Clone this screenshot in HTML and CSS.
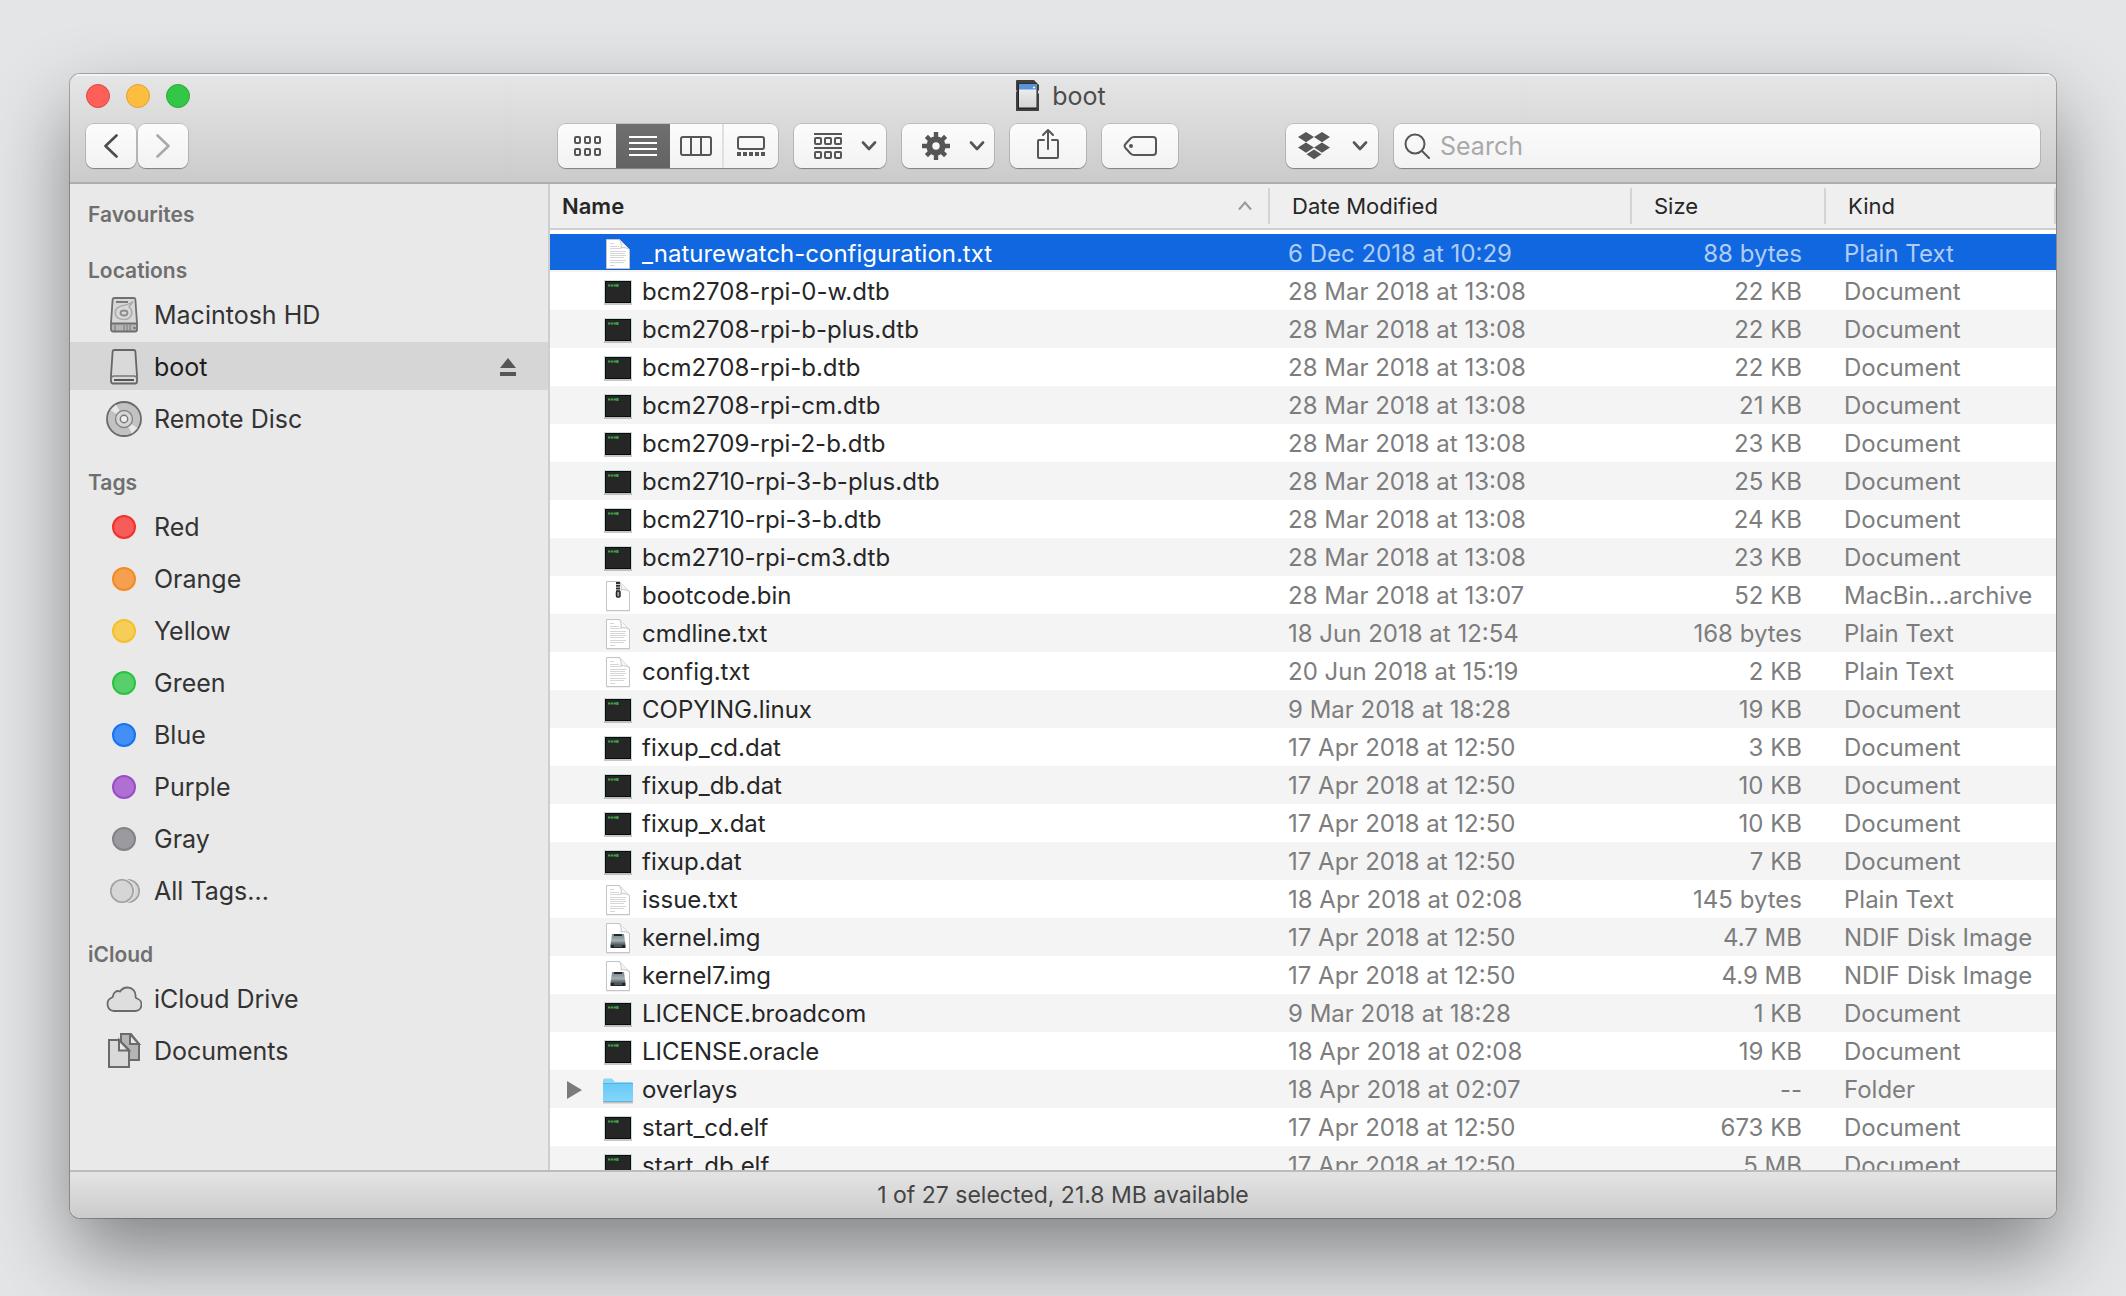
FILE: index.html
```
<!DOCTYPE html>
<html lang="en">
<head>
<meta charset="utf-8">
<title>boot</title>
<link rel="stylesheet" href="styles.css">
</head>
<body>
<svg class="sprite" aria-hidden="true">
  <defs>
    <linearGradient id="folder-fill" x1="0" y1="0" x2="0" y2="1"><stop offset="0" stop-color="#69cbf7"/><stop offset="1" stop-color="#85d5f9"/></linearGradient>
    <linearGradient id="card-fill" x1="0" y1="0" x2="0" y2="1"><stop offset="0" stop-color="#f4f4f4"/><stop offset="1" stop-color="#d4d4d4"/></linearGradient>
    <linearGradient id="drive-fill" x1="0" y1="0" x2="0" y2="1"><stop offset="0" stop-color="#75828a"/><stop offset=".6" stop-color="#a4b0b5"/><stop offset="1" stop-color="#4b5458"/></linearGradient>
  </defs>
  <symbol id="exec" viewBox="0 0 32 32">
    <rect x="2" y="5" width="28" height="24" fill="#000" opacity=".22"/>
    <rect x="2" y="4" width="28" height="23" fill="#c5dde0"/>
    <rect x="3" y="5" width="26" height="22" fill="#0c0c0c"/>
    <rect x="4" y="6" width="24" height="20" fill="#262626"/>
    <path d="M6 9.500h2.500M9 9.500h2.500M12 9.500h2.500M15.500 8v3" stroke="#3f9d4b" stroke-width="2" fill="none"/>
  </symbol>
  <symbol id="page" viewBox="0 0 32 32">
    <path d="M4 2.500h14l10 10v19H4z" fill="#000" opacity=".12"/>
    <path d="M4.500 1.500h13l10 10v19h-23z" fill="#fff" stroke="#c4c4c4"/>
    <path d="M17.500 1.500c1.500 3 2 5 1.500 8.500 3-1 6 0 8.500 1.500" fill="#f6f6f6" stroke="#c4c4c4"/>
  </symbol>
  <symbol id="text" viewBox="0 0 32 32">
    <use href="#page"/>
    <path d="M8 5.500h4M8 8.500h9M8 10.500h11M8 13.500h16M8 15.500h15M8 17.500h16M8 19.500h14M8 22.500h16M8 24.500h14M8 27.500h5" stroke="#d6d6d6" fill="none"/>
  </symbol>
  <symbol id="archive" viewBox="0 0 32 32">
    <use href="#page"/>
    <path d="M16 2v12" stroke="#2b3236" stroke-width="4" stroke-dasharray="2 .8" fill="none"/>
    <rect x="14.500" y="11" width="3.500" height="6" rx="1" fill="#9aa3a8" stroke="#22282b" stroke-width="1.500"/>
  </symbol>
  <symbol id="image" viewBox="0 0 32 32">
    <use href="#page"/>
    <path d="M10 12h12l1.500 11H8.500z" fill="url(#drive-fill)"/>
    <path d="M12 13h8" stroke="#20272a" stroke-width="2"/>
    <path d="M8.500 23h15v3h-15z" fill="#20272a"/>
    <path d="M12 24h8" stroke="#77848a"/>
  </symbol>
  <symbol id="folder" viewBox="0 0 32 32">
    <path d="M1 28.500h30" stroke="#000" opacity=".2" stroke-width="2"/>
    <path d="M1 6a1.500 1.500 0 0 1 1.500-1.500H10L13 8h16.500A1.500 1.500 0 0 1 31 9.500V26H1z" fill="#8fd6f7"/>
    <path d="M1 10h30v16.500a1 1 0 0 1-1 1H2a1 1 0 0 1-1-1z" fill="url(#folder-fill)"/>
    <path d="M1 9.500h30M1.500 27.500h29" stroke="#58b4df"/>
  </symbol>
  <symbol id="chevron" viewBox="0 0 16 10"><path d="M2 1.500l6 6.500 6-6.500" fill="none" stroke="#565656" stroke-width="2.600" stroke-linecap="round" stroke-linejoin="round"/></symbol>
</svg>

<main class="window">
  <header class="toolbar">
    <div class="titlebar">
      <div class="lights">
        <button class="light close" aria-label="Close"></button>
        <button class="light minimise" aria-label="Minimise"></button>
        <button class="light zoom" aria-label="Zoom"></button>
      </div>
      <h1 class="title">
        <svg width="24" height="32" viewBox="0 0 24 32"><path d="M0 1a1 1 0 0 1 1-1h17l5 5v5l-1 1v2l1 1v17H0V12l1-1-1-1z" fill="#3f3f3f"/><path d="M2 3.500h19V29H2z" fill="#242424"/><path d="M3 4h17.500v23.500H3z" fill="url(#card-fill)"/><path d="M3 4h17.500v5.500H3z" fill="#5b92da"/><path d="M17 7.500h2" stroke="#fff" stroke-width="1.500"/></svg>
        boot
      </h1>
    </div>
    <div class="controls">
      <div class="nav">
        <button class="btn arrow" aria-label="Back"><svg width="14" height="24" viewBox="0 0 14 24" fill="none" stroke="#4c4c4c" stroke-width="2.600" stroke-linecap="round" stroke-linejoin="round"><path d="M12.500 1.500L1.500 12l11 10.500"/></svg></button>
        <button class="btn arrow" aria-label="Forward"><svg width="14" height="24" viewBox="0 0 14 24" fill="none" stroke="#a9a9a9" stroke-width="2.600" stroke-linecap="round" stroke-linejoin="round"><path d="M1.500 1.500l11 10.500-11 10.500"/></svg></button>
      </div>
      <span class="gap-left"></span>
      <div class="tools">
        <div class="segments">
          <button class="segment first" aria-label="Icon view"><svg width="30" height="22" viewBox="0 0 30 22" fill="none" stroke="#565656" stroke-width="2"><rect x="2" y="2" width="5" height="6" rx="1"/><rect x="12" y="2" width="5" height="6" rx="1"/><rect x="22" y="2" width="5" height="6" rx="1"/><rect x="2" y="14" width="5" height="6" rx="1"/><rect x="12" y="14" width="5" height="6" rx="1"/><rect x="22" y="14" width="5" height="6" rx="1"/></svg></button>
          <button class="segment active" aria-label="List view" aria-pressed="true"><svg width="28" height="20" viewBox="0 0 28 20" stroke="#fff" stroke-width="2"><path d="M0 1h28M0 7h28M0 13h28M0 19h28"/></svg></button>
          <button class="segment columns" aria-label="Column view"><svg width="32" height="20" viewBox="0 0 32 20" fill="none" stroke="#565656" stroke-width="2"><rect x="1" y="1" width="30" height="18" rx="2"/><path d="M11 1v18M21 1v18"/></svg></button>
          <button class="segment last" aria-label="Gallery view"><svg width="28" height="20" viewBox="0 0 28 20" fill="none" stroke="#565656" stroke-width="2"><rect x="1" y="1" width="26" height="12" rx="2"/><path d="M0 18h28" stroke-width="4" stroke-dasharray="4 2"/></svg></button>
        </div>
        <button class="btn menu" aria-label="Group">
          <svg width="28" height="26" viewBox="0 0 28 26" fill="none" stroke="#565656" stroke-width="2"><path d="M0 1h28M0 15h28"/><rect x="1" y="5" width="6" height="6" rx="1"/><rect x="11" y="5" width="6" height="6" rx="1"/><rect x="21" y="5" width="6" height="6" rx="1"/><rect x="1" y="19" width="6" height="6" rx="1"/><rect x="11" y="19" width="6" height="6" rx="1"/><rect x="21" y="19" width="6" height="6" rx="1"/></svg>
          <svg width="16" height="10"><use href="#chevron"/></svg>
        </button>
        <button class="btn menu" aria-label="Action">
          <svg width="28" height="28" viewBox="0 0 28 28"><g stroke="#565656" stroke-width="4.400" fill="none"><path d="M14 0v7M14 21v7M0 14h7M21 14h7M4.400 4.400l5 5M18.600 18.600l5 5M23.600 4.400l-5 5M9.400 18.600l-5 5"/><circle cx="14" cy="14" r="6.700" stroke-width="6"/></g></svg>
          <svg width="16" height="10"><use href="#chevron"/></svg>
        </button>
        <button class="btn single" aria-label="Share"><svg class="raised" width="24" height="32" viewBox="0 0 24 32" fill="none" stroke="#565656" stroke-width="2" stroke-linejoin="round" stroke-linecap="round"><path d="M8 12H3a1 1 0 0 0-1 1v16a1 1 0 0 0 1 1h18a1 1 0 0 0 1-1V13a1 1 0 0 0-1-1h-5M12 21V2M7 7l5-5 5 5"/></svg></button>
        <button class="btn single" aria-label="Edit tags"><svg width="34" height="22" viewBox="0 0 34 22"><path d="M11 2h19a3 3 0 0 1 3 3v12a3 3 0 0 1-3 3H11c-1.500 0-2.500-.5-3.500-1.500l-5-5.500a3 3 0 0 1 0-4l5-5.500C8.500 2.500 9.500 2 11 2z" fill="none" stroke="#565656" stroke-width="2"/><circle cx="8" cy="11" r="2" fill="#565656"/></svg></button>
      </div>
      <span class="gap-right"></span>
      <div class="tools search-tools">
        <button class="btn menu" aria-label="Dropbox">
          <svg width="32" height="28" viewBox="0 0 32 28" fill="#565656"><path d="M8 0l8 5-8 5.200L0 5zM24 0l8 5-8 5.200L16 5zM8 10.400l8 5.100-8 5.200-8-5.200zM24 10.400l8 5.100-8 5.200-8-5.200zM16 17.500l7.500 4.800L16 27.200l-7.500-4.900z"/></svg>
          <svg width="16" height="10"><use href="#chevron"/></svg>
        </button>
        <label class="btn search">
          <svg width="26" height="26" viewBox="0 0 26 26" fill="none" stroke="#565656" stroke-width="2" stroke-linecap="round"><circle cx="11" cy="11" r="9.500"/><path d="M18 18l7 7"/></svg>
          <input type="search" placeholder="Search" aria-label="Search">
        </label>
      </div>
    </div>
  </header>

  <div class="content">
    <nav class="sidebar">
      <h2 class="group top">Favourites</h2>
      <h2 class="group">Locations</h2>
      <a class="place" href="#"><svg width="36" height="36" viewBox="0 0 36 36"><path d="M8.500 1h19q1.700 0 1.900 1.700L31 26.500H5L6.600 2.700Q6.800 1 8.500 1z" fill="#d8d8d8"/><path d="M5 26.500h26v6a2 2 0 0 1-2 2H7a2 2 0 0 1-2-2z" fill="#b4b4b4"/><path d="M8.500 1h19q1.700 0 1.900 1.700L31 26v6.500a2 2 0 0 1-2 2H7a2 2 0 0 1-2-2V26L6.600 2.700Q6.800 1 8.500 1zM5 26.500h26" fill="none" stroke="#6f6f6f" stroke-width="1.800"/><path d="M10 5h12" stroke="#6f6f6f" stroke-width="1.800"/><path d="M27 4.500l-4 5.500c5 4 3 12.500-5 12.500-10 0-12-10.500-3-13.500 5-1 8-1 12-4.500z" fill="none" stroke="#ababab" stroke-width="1.600"/><ellipse cx="18" cy="16" rx="3.500" ry="2.500" fill="none" stroke="#8d8d8d" stroke-width="1.800"/><path d="M9 28v6M18 28v6M21 28v6M24 28v6" stroke="#777"/><circle cx="28.500" cy="31" r="1" fill="#555"/></svg>Macintosh HD</a>
      <a class="place current" href="#"><svg width="36" height="36" viewBox="0 0 36 36"><path d="M8.500 1h19q1.700 0 1.900 1.700L31 27v5.500a2 2 0 0 1-2 2H7a2 2 0 0 1-2-2V27L6.600 2.700Q6.800 1 8.500 1z" fill="#d9d9d9" stroke="#666" stroke-width="1.800"/><path d="M6 28.500q0-1.500 2-1.500h20q2 0 2 1.500" fill="none" stroke="#777" stroke-width="1.500"/><path d="M8 31h20" stroke="#555" stroke-width="2"/></svg>boot
        <svg class="eject" width="16" height="18" viewBox="0 0 16 18" fill="#565656"><path d="M8 0l8 10H0zM0 14h16v4H0z"/></svg></a>
      <a class="place" href="#"><svg width="36" height="36" viewBox="0 0 36 36"><circle cx="18" cy="18" r="17" fill="#c2c2c2" stroke="#6a6a6a" stroke-width="1.800"/><path d="M18 18L4.500 9l5.500-5.500zM18 18l13.500 9-5.500 5.500z" fill="#e8e8e8"/><circle cx="18" cy="18" r="8.500" fill="#d6d6d6" stroke="#858585" stroke-width="1.400"/><circle cx="18" cy="18" r="3.700" fill="#efefef" stroke="#777" stroke-width="1.400"/></svg>Remote Disc</a>
      <h2 class="group">Tags</h2>
      <a class="place" href="#"><i class="dot red"></i>Red</a>
      <a class="place" href="#"><i class="dot orange"></i>Orange</a>
      <a class="place" href="#"><i class="dot yellow"></i>Yellow</a>
      <a class="place" href="#"><i class="dot green"></i>Green</a>
      <a class="place" href="#"><i class="dot blue"></i>Blue</a>
      <a class="place" href="#"><i class="dot purple"></i>Purple</a>
      <a class="place" href="#"><i class="dot gray"></i>Gray</a>
      <a class="place" href="#"><svg width="36" height="36" viewBox="0 0 36 36" fill="#d6d6d6" stroke="#a0a0a0" stroke-width="1.600"><circle cx="22" cy="18" r="11.200"/><circle cx="16" cy="18" r="13" fill="#e9e9e9" stroke="none"/><circle cx="16" cy="18" r="11.200"/></svg>All Tags...</a>
      <h2 class="group">iCloud</h2>
      <a class="place" href="#"><svg width="36" height="36" viewBox="0 0 36 36"><path d="M8 30a7 7 0 0 1-2-13.500q.8-.5 1-1.500c.5-4 4-6 7-4.500C16 7.500 18.500 6.500 21.500 6.500c5 0 8.500 4 8 9-.1 1 .5 1.500 1.500 2A6.400 6.400 0 0 1 29 30z" fill="#dedede" stroke="#6a6a6a" stroke-width="1.800"/></svg>iCloud Drive</a>
      <a class="place" href="#"><svg width="36" height="36" viewBox="0 0 36 36" stroke="#6a6a6a" stroke-width="2"><path d="M15 1h10l8 10v16H15z" fill="#b4b4b4"/><path d="M24 1v10h9z" fill="#e8e8e8"/><path d="M3 7h10l10 10v17H3z" fill="#d9d9d9"/><path d="M13 7v10.500h10z" fill="#e8e8e8"/></svg>Documents</a>
    </nav>

    <section class="files">
      <table>
        <colgroup><col><col class="col-date"><col class="col-size"><col class="col-kind"></colgroup>
        <thead>
          <tr>
            <th class="name" aria-sort="ascending"><span>Name <svg width="14" height="10" viewBox="0 0 14 10"><path d="M1 8.500L7 1.500l6 7" fill="none" stroke="#999" stroke-width="2"/></svg></span></th>
            <th><span>Date Modified</span></th><th><span>Size</span></th><th class="kind"><span>Kind</span></th>
          </tr>
        </thead>
        <tbody>
          <tr class="selected"><td><svg><use href="#text"/></svg>_naturewatch-configuration.txt</td><td>6 Dec 2018 at 10:29</td><td>88 bytes</td><td>Plain Text</td></tr>
          <tr><td><svg><use href="#exec"/></svg>bcm2708-rpi-0-w.dtb</td><td>28 Mar 2018 at 13:08</td><td>22 KB</td><td>Document</td></tr>
          <tr><td><svg><use href="#exec"/></svg>bcm2708-rpi-b-plus.dtb</td><td>28 Mar 2018 at 13:08</td><td>22 KB</td><td>Document</td></tr>
          <tr><td><svg><use href="#exec"/></svg>bcm2708-rpi-b.dtb</td><td>28 Mar 2018 at 13:08</td><td>22 KB</td><td>Document</td></tr>
          <tr><td><svg><use href="#exec"/></svg>bcm2708-rpi-cm.dtb</td><td>28 Mar 2018 at 13:08</td><td>21 KB</td><td>Document</td></tr>
          <tr><td><svg><use href="#exec"/></svg>bcm2709-rpi-2-b.dtb</td><td>28 Mar 2018 at 13:08</td><td>23 KB</td><td>Document</td></tr>
          <tr><td><svg><use href="#exec"/></svg>bcm2710-rpi-3-b-plus.dtb</td><td>28 Mar 2018 at 13:08</td><td>25 KB</td><td>Document</td></tr>
          <tr><td><svg><use href="#exec"/></svg>bcm2710-rpi-3-b.dtb</td><td>28 Mar 2018 at 13:08</td><td>24 KB</td><td>Document</td></tr>
          <tr><td><svg><use href="#exec"/></svg>bcm2710-rpi-cm3.dtb</td><td>28 Mar 2018 at 13:08</td><td>23 KB</td><td>Document</td></tr>
          <tr><td><svg><use href="#archive"/></svg>bootcode.bin</td><td>28 Mar 2018 at 13:07</td><td>52 KB</td><td>MacBin...archive</td></tr>
          <tr><td><svg><use href="#text"/></svg>cmdline.txt</td><td>18 Jun 2018 at 12:54</td><td>168 bytes</td><td>Plain Text</td></tr>
          <tr><td><svg><use href="#text"/></svg>config.txt</td><td>20 Jun 2018 at 15:19</td><td>2 KB</td><td>Plain Text</td></tr>
          <tr><td><svg><use href="#exec"/></svg>COPYING.linux</td><td>9 Mar 2018 at 18:28</td><td>19 KB</td><td>Document</td></tr>
          <tr><td><svg><use href="#exec"/></svg>fixup_cd.dat</td><td>17 Apr 2018 at 12:50</td><td>3 KB</td><td>Document</td></tr>
          <tr><td><svg><use href="#exec"/></svg>fixup_db.dat</td><td>17 Apr 2018 at 12:50</td><td>10 KB</td><td>Document</td></tr>
          <tr><td><svg><use href="#exec"/></svg>fixup_x.dat</td><td>17 Apr 2018 at 12:50</td><td>10 KB</td><td>Document</td></tr>
          <tr><td><svg><use href="#exec"/></svg>fixup.dat</td><td>17 Apr 2018 at 12:50</td><td>7 KB</td><td>Document</td></tr>
          <tr><td><svg><use href="#text"/></svg>issue.txt</td><td>18 Apr 2018 at 02:08</td><td>145 bytes</td><td>Plain Text</td></tr>
          <tr><td><svg><use href="#image"/></svg>kernel.img</td><td>17 Apr 2018 at 12:50</td><td>4.7 MB</td><td>NDIF Disk Image</td></tr>
          <tr><td><svg><use href="#image"/></svg>kernel7.img</td><td>17 Apr 2018 at 12:50</td><td>4.9 MB</td><td>NDIF Disk Image</td></tr>
          <tr><td><svg><use href="#exec"/></svg>LICENCE.broadcom</td><td>9 Mar 2018 at 18:28</td><td>1 KB</td><td>Document</td></tr>
          <tr><td><svg><use href="#exec"/></svg>LICENSE.oracle</td><td>18 Apr 2018 at 02:08</td><td>19 KB</td><td>Document</td></tr>
          <tr class="folder"><td><button class="disclose" aria-label="Expand overlays"></button><svg><use href="#folder"/></svg>overlays</td><td>18 Apr 2018 at 02:07</td><td>--</td><td>Folder</td></tr>
          <tr><td><svg><use href="#exec"/></svg>start_cd.elf</td><td>17 Apr 2018 at 12:50</td><td>673 KB</td><td>Document</td></tr>
          <tr><td><svg><use href="#exec"/></svg>start_db.elf</td><td>17 Apr 2018 at 12:50</td><td>5 MB</td><td>Document</td></tr>
        </tbody>
      </table>
    </section>
  </div>

  <footer class="status">1 of 27 selected, 21.8 MB available</footer>
</main>
</body>
</html>
```
FILE: styles.css
```
* { box-sizing: border-box; }

body {
  margin: 0;
  height: 100vh;
  padding: 74px 70px 78px;
  overflow: hidden;
  background: #e4e5e7;
  color: #262626;
  font-family: Inter, "Liberation Sans", sans-serif;
  font-size: 24px;
}

button, input { font: inherit; color: inherit; }
button { padding: 0; border: 0; }
svg { flex: none; }
.sprite { position: absolute; width: 0; height: 0; }

.window {
  display: flex;
  flex-direction: column;
  height: 100%;
  overflow: hidden;
  border-radius: 10px;
  background: #fff;
  box-shadow: 0 0 0 1px rgba(0, 0, 0, .25), 0 36px 80px rgba(0, 0, 0, .43);
}

/* Toolbar */
.toolbar {
  display: flex;
  flex-direction: column;
  flex: none;
  gap: 6px;
  height: 110px;
  padding: 0 16px;
  border-bottom: 2px solid #adadad;
  background: linear-gradient(#e6e6e6, #cbcbcb);
  box-shadow: inset 0 2px #f4f4f4;
}

.titlebar {
  display: grid;
  grid-template-columns: 1fr auto 1fr;
  align-items: center;
  height: 44px;
}

.lights { display: flex; gap: 16px; }

.light {
  width: 24px;
  height: 24px;
  border: 1px solid;
  border-radius: 50%;
}
.close { background: #fe5f58; border-color: #e2443f; }
.minimise { background: #febd3f; border-color: #dfa033; }
.zoom { background: #33c748; border-color: #27aa35; }

.title {
  display: flex;
  align-items: center;
  gap: 12px;
  margin: 0;
  padding-right: 4px;
  color: #4c4c4c;
  font-size: 25px;
  font-weight: 400;
}

.controls, .nav, .tools { display: flex; }
.nav { gap: 2px; }
.tools { gap: 16px; }
.gap-left { flex: 370 0 0; }
.gap-right { flex: 108 0 0; }
.search-tools { flex: 754 0 0; }

.btn, .segments {
  height: 44px;
  border-radius: 8px;
  background: linear-gradient(#fcfcfc, #f2f2f2);
  box-shadow: 0 0 0 1px rgba(0, 0, 0, .12), 0 1px 1px rgba(0, 0, 0, .3);
}

.btn {
  display: flex;
  align-items: center;
  justify-content: center;
}

.arrow { width: 50px; }
.single { width: 76px; }
.menu { flex: none; width: 92px; gap: 19px; padding-left: 11px; }
.search-tools .menu { gap: 22px; padding-left: 2px; }
.raised { margin-bottom: 4px; }

.segments { display: flex; overflow: hidden; }
.segment {
  display: flex;
  align-items: center;
  justify-content: center;
  width: 54px;
  background: transparent;
}
.segment.first { width: 58px; padding-left: 2px; }
.segment.active { background: linear-gradient(#6f6f6f, #636363); }
.segment.columns { width: 52px; }
.segment.last { width: 56px; border-left: 2px solid #e0e0e0; }

.search {
  flex: 1;
  justify-content: flex-start;
  gap: 10px;
  padding: 0 10px;
}
.search input {
  flex: 1;
  min-width: 0;
  padding: 0;
  border: 0;
  outline: 0;
  background: transparent;
  font-size: 25px;
}
.search input::placeholder { color: #a9a9a9; opacity: 1; }

/* Sidebar */
.content { display: flex; flex: 1; min-height: 0; }

.sidebar {
  flex: none;
  width: 480px;
  overflow: hidden;
  border-right: 2px solid #cecece;
  background: #e9e9e9;
}

.group {
  height: 56px;
  margin: 0;
  padding: 18px 0 0 18px;
  color: #6f6f6f;
  font-size: 21px;
  font-weight: 600;
  line-height: 40px;
}
.group.top { height: 49px; padding-top: 11px; }

.place {
  display: flex;
  align-items: center;
  gap: 12px;
  height: 52px;
  padding: 2px 32px 0 36px;
  border: solid #e9e9e9;
  border-width: 1px 0 3px;
  color: #333;
  font-size: 25px;
  text-decoration: none;
}
.place.current { background: #d6d6d7; color: #1c1c1c; }
.eject { margin-left: auto; }

.dot {
  width: 24px;
  height: 24px;
  margin: 0 6px;
  border: 2px solid;
  border-radius: 50%;
}
.red { background: #f65c5a; border-color: #f4302f; }
.orange { background: #f5a04f; border-color: #f38a25; }
.yellow { background: #f6cd56; border-color: #f4c12d; }
.green { background: #58cf69; border-color: #2ac340; }
.blue { background: #438ff6; border-color: #1673f4; }
.purple { background: #b070d3; border-color: #9c4cc8; }
.gray { background: #9b9b9f; border-color: #828287; }

/* File list */
.files { flex: 1; min-width: 0; overflow: hidden; }

table { width: 100%; border-spacing: 0; table-layout: fixed; }
.col-date { width: 362px; }
.col-size { width: 194px; }
.col-kind { width: 232px; }

th {
  height: 46px;
  padding: 0;
  border-bottom: 2px solid #d0d0d0;
  background: #efefef;
  font-size: 22px;
  font-weight: 400;
  text-align: left;
}
th span {
  display: flex;
  align-items: center;
  justify-content: space-between;
  height: 36px;
  padding: 0 16px 0 22px;
  border-left: 2px solid #d4d4d4;
}
th.name { font-weight: 600; }
th.name span { padding-left: 12px; border-left: 0; }
th.kind span { border-right: 2px solid #d4d4d4; }

tbody::before { content: ""; display: block; height: 4px; }

td {
  height: 38px;
  padding: 2px 0 0 20px;
  color: #7d7d7d;
  line-height: 36px;
  white-space: nowrap;
}
tbody tr:nth-child(odd) td { background: #f4f4f5; }
td:first-child {
  display: flex;
  align-items: center;
  gap: 8px;
  padding-left: 52px;
  color: #262626;
}
td:first-child svg { width: 32px; height: 32px; }
td:nth-child(3) { padding: 2px 22px 0 0; text-align: right; }

tbody tr.selected td { background: linear-gradient(#1167e0 36px, #f4f4f5 36px); color: #b0cdf6; }
tbody tr.selected td:first-child { color: #fff; }

tr.folder td:first-child { padding-left: 17px; }
.disclose {
  width: 15px;
  height: 18px;
  margin-right: 12px;
  background: #7b7b7b;
  clip-path: polygon(0 0, 100% 50%, 0 100%);
}

/* Status bar */
.status {
  flex: none;
  height: 48px;
  border-top: 2px solid #bcbcbc;
  background: linear-gradient(#e4e4e4, #cbcbcb);
  color: #444;
  font-size: 23px;
  line-height: 46px;
  text-align: center;
}
```
